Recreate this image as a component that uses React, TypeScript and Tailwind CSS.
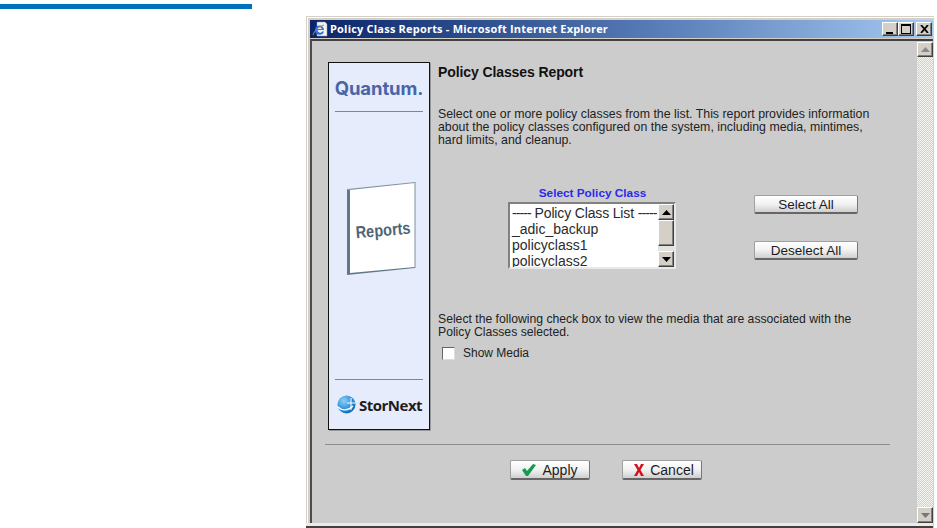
const Bevel = "border border-t-white border-l-white border-r-[#404040] border-b-[#404040] bg-[#d4d0c8] flex items-center justify-center shadow-[inset_-1px_-1px_0_#808080]";

const WinButton = ({ children, className }: { children: React.ReactNode; className?: string }) => (
  <div className={`${Bevel} w-4 h-[14px] ${className ?? ""}`}>{children}</div>
);

const Arrow = ({ down, color = "#000" }: { down?: boolean; color?: string }) => (
  <svg width="9" height="5" viewBox="0 0 9 5">
    <path d={down ? "M0 0h9L4.5 5z" : "M4.5 0L9 5H0z"} fill={color} />
  </svg>
);

const GrayButton = ({ children, className }: { children: React.ReactNode; className?: string }) => (
  <button
    className={`flex items-center justify-center rounded-[2px] border border-[#a0a0a0] border-b-2 border-b-[#666] border-r-[#777] bg-gradient-to-b from-white via-[#f2f2f2] to-[#cfcfcf] text-[#1c1c1c] ${className ?? ""}`}
  >
    {children}
  </button>
);

const Sidebar = () => (
  <aside className="w-[102px] h-[368px] border border-[#111] bg-[#e6ecfc] flex flex-col items-center shrink-0 shadow-[1px_1px_0_#999]">
    <div className="mt-[14px] h-[22px] leading-[22px] text-[18.5px] font-bold tracking-[-0.1px] text-[#4a64a8] font-['Inter',sans-serif]">
      Quantum.
    </div>
    <div className="mt-[12px] w-[88px] h-px bg-[#6d86bd]" />
    <svg width="72" height="96" viewBox="0 0 72 96" className="mt-[69px] ml-[5px] overflow-visible">
      <path d="M1 8L69 1V87L1 94z" fill="#fff" />
      <path d="M1 8L4 9V92L69 86V87L1 94z" fill="#5f7888" />
      <path d="M1 8L69 1V2L4 9z" fill="#8398a5" />
      <path d="M69 1V87" stroke="#7d919e" strokeWidth="1" />
      <text
        x="37"
        y="55"
        textAnchor="middle"
        transform="rotate(-5 37 49)"
        fontFamily="'Liberation Sans', sans-serif"
        fontWeight="700"
        fontSize="17"
        textLength="55"
        lengthAdjust="spacingAndGlyphs"
        fill="#4f6574"
      >
        Reports
      </text>
    </svg>
    <div className="mt-[102px] w-[88px] h-px bg-[#6d86bd]" />
    <div className="mt-[15px] pl-[2px] flex items-center w-[88px] gap-[3px]">
      <svg width="19" height="19" viewBox="0 0 19 19" className="shrink-0">
        <defs>
          <radialGradient id="globe" cx="0.35" cy="0.3" r="0.8">
            <stop offset="0" stopColor="#8fd0f5" />
            <stop offset="0.6" stopColor="#2a8fdc" />
            <stop offset="1" stopColor="#0f5ea8" />
          </radialGradient>
        </defs>
        <circle cx="9.5" cy="9.5" r="9" fill="url(#globe)" />
        <path d="M1 12c4 4 10 4 15-1" fill="none" stroke="#fff" strokeWidth="1.4" />
        <path d="M14 3v12M10 8h8" fill="none" stroke="#fff" strokeWidth="1" />
      </svg>
      <span className="text-[15px] leading-[18px] font-bold tracking-[-0.5px] text-[#1e1e1e] font-['Open_Sans',sans-serif] whitespace-nowrap">
        StorNext
      </span>
    </div>
  </aside>
);

const PolicyList = () => (
  <div className="w-[168px] h-[67px] border-2 border-t-[#808080] border-l-[#808080] border-r-[#e8e8e8] border-b-[#e8e8e8] flex bg-white">
    <ul className="flex-1 pl-[2px] pt-px text-[14px] leading-[16px] text-[#2a2a2a] overflow-hidden">
      <li className="whitespace-nowrap">
        <span className="tracking-[-0.9px]">-----</span>
        <span className="tracking-[-0.15px]"> Policy Class List </span>
        <span className="tracking-[-0.9px]">-----</span>
      </li>
      <li>_adic_backup</li>
      <li>policyclass1</li>
      <li>policyclass2</li>
    </ul>
    <div className="w-4 bg-[#e4e2dc] flex flex-col justify-between">
      <div className="flex flex-col">
        <div className={`${Bevel} h-4`}>
          <Arrow />
        </div>
        <div className={`${Bevel} h-[26px]`} />
      </div>
      <div className={`${Bevel} h-4`}>
        <Arrow down />
      </div>
    </div>
  </div>
);

const App = () => {
  return (
    <div className="flex w-[937px] h-[528px] bg-white overflow-hidden font-['Liberation_Sans',Arial,sans-serif]">
      <div className="w-[306px] shrink-0 pt-1">
        <div className="w-[252px] h-[5px] bg-[#0072bc]" />
      </div>

      <div className="mt-4 w-[628px] h-[512px] border-t border-l border-[#d4d0c8] flex flex-col">
        <div className="border-t border-l border-white flex-1 flex flex-col min-h-0">
          <div className="flex-1 flex flex-col bg-[#d4d0c8] pt-[2px] pl-[2px] pr-px min-h-0">
            {/* title bar */}
            <div className="h-[18px] shrink-0 flex items-center bg-gradient-to-r from-[#0a246a] via-[#5f84bd] via-60% to-[#a6caf0] pl-[2px] pr-px">
              <svg width="16" height="16" viewBox="0 0 16 16" className="shrink-0">
                <path d="M5 1h8l2 2v12H5z" fill="#f2f2f2" stroke="#9a9a9a" strokeWidth="0.5" />
                <path d="M3 9a4.500 4.500 0 119 0H5.500a2.500 2.500 0 004.600 1.500H12A4.600 4.600 0 013 9zm2.600-1H10a2.300 2.300 0 00-4.400 0z" fill="#2f6fe0" />
                <path d="M1 14c1-4 6-9 11-10" fill="none" stroke="#c98a2c" strokeWidth="1" />
              </svg>
              <span className="ml-[2px] text-[11px] leading-[18px] font-bold tracking-[0.2px] text-white whitespace-nowrap font-['Open_Sans',sans-serif]">
                Policy Class Reports - Microsoft Internet Explorer
              </span>
              <div className="ml-auto flex">
                <WinButton>
                  <div className="w-[7px] h-[2px] bg-black mt-[7px] -ml-[2px]" />
                </WinButton>
                <WinButton>
                  <div className="w-[10px] h-[10px] border border-black border-t-2" />
                </WinButton>
                <WinButton className="ml-[2px]">
                  <svg width="9" height="8" viewBox="0 0 9 8">
                    <path d="M1 0l7 8M8 0L1 8" stroke="#000" strokeWidth="1.8" fill="none" />
                  </svg>
                </WinButton>
              </div>
            </div>

            {/* page */}
            <div className="mt-px flex-1 min-h-0 flex border-t-2 border-l-2 border-t-[#404040] border-l-[#4c4c4c] bg-[#cccccc]">
              <div className="w-[605px] flex flex-col">
                <div className="flex pl-4 pt-[21px]">
                  <Sidebar />
                  <section className="ml-[8px] flex-1 text-[12.35px] leading-[13px] text-[#222]">
                    <h1 className="mt-[2px] text-[14px] leading-4 font-bold text-[#111] tracking-[-0.1px]">
                      Policy Classes Report
                    </h1>
                    <p className="mt-[28px] w-[440px]">
                      Select one or more policy classes from the list. This report provides information about the policy classes configured on the system, including media, mintimes, hard limits, and cleanup.
                    </p>
                    <div className="mt-[39px] flex">
                      <div className="ml-[70px] w-[168px]">
                        <div className="h-4 leading-[15px] pl-[1px] text-center text-[11.8px] font-bold text-[#2a2aee]">
                          Select Policy Class
                        </div>
                        <PolicyList />
                      </div>
                      <div className="ml-[78px] mt-[9px] flex flex-col gap-[27px]">
                        <GrayButton className="w-[104px] h-[19px] text-[13.5px]">Select All</GrayButton>
                        <GrayButton className="w-[104px] h-[19px] text-[13.5px]">Deselect All</GrayButton>
                      </div>
                    </div>
                    <p className="mt-[44px] w-[440px] text-[12.2px]">
                      Select the following check box to view the media that are associated with the Policy Classes selected.
                    </p>
                    <label className="mt-[8px] ml-1 flex items-center h-[13px]">
                      <span className="w-[13px] h-[13px] bg-white border border-t-[#666] border-l-[#666] border-r-[#ddd] border-b-[#ddd]" />
                      <span className="ml-2 text-[12px]">Show Media</span>
                    </label>
                  </section>
                </div>
                <div className="mt-[14px] ml-[13px] w-[565px] h-px bg-[#8e8e8e]" />
                <div className="mt-[15px] ml-[198px] flex gap-8">
                  <GrayButton className="w-20 h-5 gap-[6px] pt-px text-[14px]">
                    <svg width="14" height="12" viewBox="0 0 14 12">
                      <path d="M0 6l3-2 2 3 6-7 3 1-8 11H4z" fill="#169a52" />
                    </svg>
                    Apply
                  </GrayButton>
                  <GrayButton className="w-20 h-5 gap-[6px] pt-px pl-[4px] text-[14px]">
                    <svg width="10" height="12" viewBox="0 0 10 12">
                      <path d="M0 0h3l2 4 2-4h3L6.500 6 10 12H7L5 8l-2 4H0l3.500-6z" fill="#d3101c" />
                    </svg>
                    Cancel
                  </GrayButton>
                </div>
              </div>

              {/* scrollbar */}
              <div className="w-4 mt-px flex flex-col justify-between bg-[repeating-conic-gradient(#f4f4f0_0_25%,#d4d0c8_0_50%)] bg-[length:2px_2px]">
                <div className={`${Bevel} h-[15px]`}>
                  <Arrow color="#8a8a8a" />
                </div>
                <div className={`${Bevel} h-4`}>
                  <Arrow down color="#777" />
                </div>
              </div>
            </div>
            <div className="h-[3px] shrink-0 bg-[#ecebe6] -ml-1" />
            <div className="h-[2px] shrink-0 bg-[#404040] -ml-1" />
          </div>
        </div>
      </div>
    </div>
  );
};

export default App;
